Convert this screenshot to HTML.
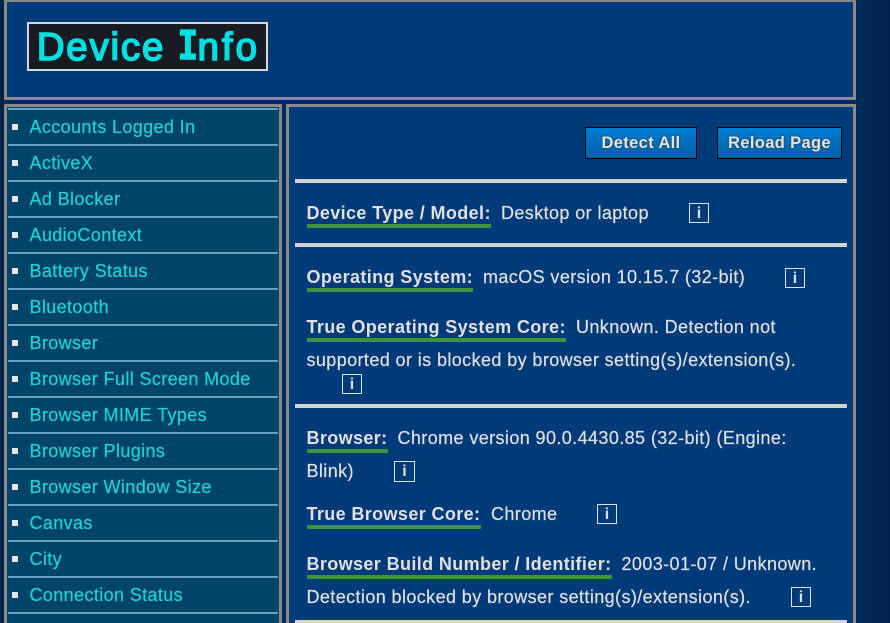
<!DOCTYPE html>
<html><head><meta charset="utf-8"><style>
html,body{margin:0;padding:0;width:890px;height:623px;overflow:hidden;}
body{position:relative;font-family:"Liberation Sans",sans-serif;background:#002a5a;}
.a{position:absolute;box-sizing:border-box;}
.t{position:absolute;white-space:nowrap;font-size:18px;line-height:20px;color:#e0e0e0;letter-spacing:.4px;-webkit-text-stroke:.2px #e0e0e0;}
.b{position:absolute;white-space:nowrap;font-size:18px;line-height:20px;color:#e0e0e0;font-weight:bold;letter-spacing:.38px;}
.u{position:absolute;height:4px;background:#3d963d;}
.hr{position:absolute;left:295px;width:552px;height:4px;background:#d2d2d2;}
.i{position:absolute;box-sizing:border-box;width:20px;height:20px;border:1px solid #d8e4f0;color:#e0e0e0;font-size:16px;font-weight:bold;line-height:19px;text-align:center;}
.btn{position:absolute;box-sizing:border-box;height:32px;top:127px;border:1px solid #000;background:linear-gradient(#0080d4,#005ea8);color:#e4e4e4;font-weight:bold;font-size:16.5px;line-height:30px;text-align:center;letter-spacing:.35px;text-shadow:0 0 2px #333;}
.l{position:absolute;left:8px;width:270px;height:2px;background:#6b9fc0;}
.n{position:absolute;left:29.5px;white-space:nowrap;font-size:18px;line-height:20px;color:#1dd3d8;letter-spacing:.38px;-webkit-text-stroke:.2px #1dd3d8;}
.s{position:absolute;left:12px;width:6px;height:6px;background:#e6e6e6;}
.h{position:absolute;top:25.5px;font-size:38.5px;line-height:44px;color:#00e0e0;white-space:nowrap;-webkit-text-stroke:1.6px #00e0e0;letter-spacing:1.8px;}
</style></head><body>
<div class="a" style="left:0;top:0;width:4px;height:623px;background:#00234c"></div>
<div class="a" style="left:856px;top:0;width:34px;height:623px;background:linear-gradient(90deg,#002c5e,#00234c)"></div>
<div class="a" style="left:4px;top:-1px;width:852px;height:101px;border:3px solid #8a8a8a;background:#003a78"></div>
<div class="a" style="left:27px;top:22px;width:241px;height:49px;border:2px solid #d4d8dc;background:#181c22"></div>
<div class="h" style="left:36.7px">Device</div>
<div class="h" style="left:178px;font-family:'Liberation Mono',monospace;font-size:44px;font-weight:bold;-webkit-text-stroke:1.6px #00e0e0;letter-spacing:0;transform:scaleX(.75);transform-origin:0 50%">I</div>
<div class="h" style="left:197.5px;letter-spacing:3px">nfo</div>

<div class="a" style="left:4px;top:104px;width:278px;height:530px;border:3px solid #8a8a8a;background:#004469"></div>
<div class="l" style="top:108px"></div><div class="l" style="top:144px"></div><div class="l" style="top:180px"></div><div class="l" style="top:216px"></div><div class="l" style="top:252px"></div><div class="l" style="top:288px"></div><div class="l" style="top:324px"></div><div class="l" style="top:360px"></div><div class="l" style="top:396px"></div><div class="l" style="top:432px"></div><div class="l" style="top:468px"></div><div class="l" style="top:504px"></div><div class="l" style="top:540px"></div><div class="l" style="top:576px"></div><div class="l" style="top:612px"></div>
<div class="s" style="top:124px"></div><div class="n" style="top:117px">Accounts Logged In</div>
<div class="s" style="top:160px"></div><div class="n" style="top:153px">ActiveX</div>
<div class="s" style="top:196px"></div><div class="n" style="top:189px">Ad Blocker</div>
<div class="s" style="top:232px"></div><div class="n" style="top:225px">AudioContext</div>
<div class="s" style="top:268px"></div><div class="n" style="top:261px">Battery Status</div>
<div class="s" style="top:304px"></div><div class="n" style="top:297px">Bluetooth</div>
<div class="s" style="top:340px"></div><div class="n" style="top:333px">Browser</div>
<div class="s" style="top:376px"></div><div class="n" style="top:369px">Browser Full Screen Mode</div>
<div class="s" style="top:412px"></div><div class="n" style="top:405px">Browser MIME Types</div>
<div class="s" style="top:448px"></div><div class="n" style="top:441px">Browser Plugins</div>
<div class="s" style="top:484px"></div><div class="n" style="top:477px">Browser Window Size</div>
<div class="s" style="top:520px"></div><div class="n" style="top:513px">Canvas</div>
<div class="s" style="top:556px"></div><div class="n" style="top:549px">City</div>
<div class="s" style="top:592px"></div><div class="n" style="top:585px">Connection Status</div>

<div class="a" style="left:286px;top:104px;width:570px;height:530px;border:3px solid #8a8a8a;background:#003a78"></div>
<div class="btn" style="left:585px;width:112px">Detect All</div>
<div class="btn" style="left:717px;width:125px">Reload Page</div>
<div class="hr" style="top:179px"></div><div class="hr" style="top:243px"></div><div class="hr" style="top:404px"></div><div class="hr" style="top:620px"></div>

<div class="b" style="left:306.5px;top:203px">Device Type / Model:</div><div class="u" style="left:307px;top:224px;width:184px"></div>
<div class="t" style="left:501px;top:203px">Desktop or laptop</div><div class="i" style="left:689px;top:203px">i</div>

<div class="b" style="left:306.5px;top:267px">Operating System:</div><div class="u" style="left:307px;top:288px;width:166px"></div>
<div class="t" style="left:483px;top:267px">macOS version 10.15.7 (32-bit)</div><div class="i" style="left:785px;top:268px">i</div>

<div class="b" style="left:306.5px;top:317px">True Operating System Core:</div><div class="u" style="left:307px;top:338px;width:259px"></div>
<div class="t" style="left:576px;top:317px">Unknown. Detection not</div>
<div class="t" style="left:306.5px;top:350px">supported or is blocked by browser setting(s)/extension(s).</div>
<div class="i" style="left:342px;top:374px">i</div>

<div class="b" style="left:306.5px;top:428px">Browser:</div><div class="u" style="left:307px;top:449px;width:81px"></div>
<div class="t" style="left:397.5px;top:428px">Chrome version 90.0.4430.85 (32-bit) (Engine:</div>
<div class="t" style="left:306.5px;top:461px">Blink)</div><div class="i" style="left:394px;top:461px;width:21px;height:21px">i</div>

<div class="b" style="left:306.5px;top:504px">True Browser Core:</div><div class="u" style="left:307px;top:525px;width:174px"></div>
<div class="t" style="left:491px;top:504px">Chrome</div><div class="i" style="left:597px;top:504px">i</div>

<div class="b" style="left:306.5px;top:554px">Browser Build Number / Identifier:</div><div class="u" style="left:307px;top:575px;width:305px"></div>
<div class="t" style="left:621.5px;top:554px">2003-01-07 / Unknown.</div>
<div class="t" style="left:306.5px;top:587px">Detection blocked by browser setting(s)/extension(s).</div>
<div class="i" style="left:791px;top:587px">i</div>
</body></html>
